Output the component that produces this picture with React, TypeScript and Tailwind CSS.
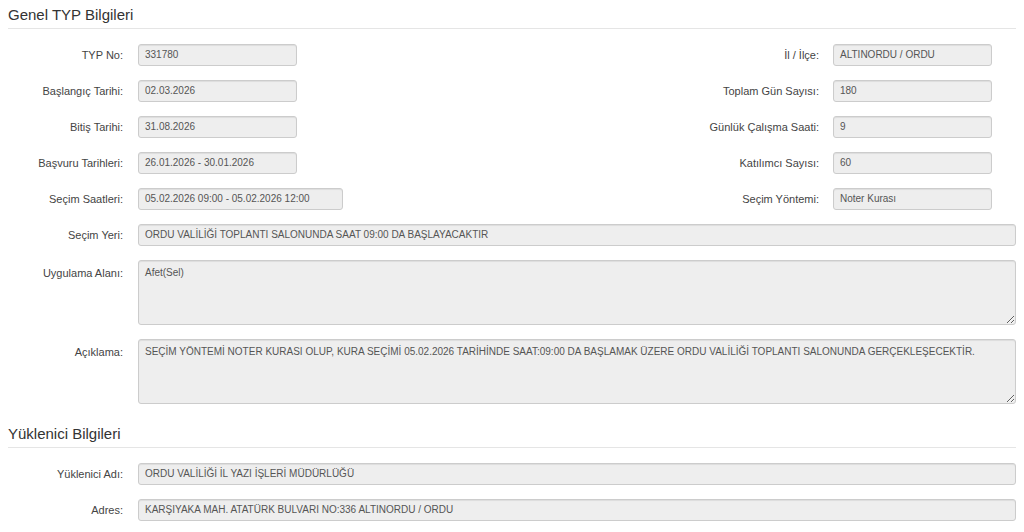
import React from 'react'

type Field = { label: string; value: string; wide?: boolean }

const leftRight: { left: Field; right?: Field }[] = [
  { left: { label: 'TYP No:', value: '331780' }, right: { label: 'İl / İlçe:', value: 'ALTINORDU / ORDU' } },
  { left: { label: 'Başlangıç Tarihi:', value: '02.03.2026' }, right: { label: 'Toplam Gün Sayısı:', value: '180' } },
  { left: { label: 'Bitiş Tarihi:', value: '31.08.2026' }, right: { label: 'Günlük Çalışma Saati:', value: '9' } },
  { left: { label: 'Başvuru Tarihleri:', value: '26.01.2026 - 30.01.2026' }, right: { label: 'Katılımcı Sayısı:', value: '60' } },
  { left: { label: 'Seçim Saatleri:', value: '05.02.2026 09:00 - 05.02.2026 12:00', wide: true }, right: { label: 'Seçim Yöntemi:', value: 'Noter Kurası' } },
]

const inputCls =
  'h-[22px] rounded-[3px] border border-[#cccccc] bg-[#eeeeee] px-[6px] text-[10px] leading-[20px] text-[#555555] shadow-[inset_0_1px_1px_rgba(0,0,0,0.075)] truncate'

function Box({ value, className = '' }: { value: string; className?: string }) {
  return <div className={`${inputCls} ${className}`}>{value}</div>
}

function Label({ text, className = '' }: { text: string; className?: string }) {
  return <div className={`shrink-0 text-right text-[11px] text-[#444444] ${className}`}>{text}</div>
}

function Legend({ title }: { title: string }) {
  return (
    <div className="mx-2 border-b border-[#e5e5e5] pt-[4px] pb-[2px] text-[15px] leading-[22px] text-[#333333]">
      {title}
    </div>
  )
}

function FullRow({ label, value }: { label: string; value: string }) {
  return (
    <div className="flex items-center pl-2 pr-2">
      <Label text={label} className="w-[115px]" />
      <Box value={value} className="ml-[15px] flex-1" />
    </div>
  )
}

function AreaRow({ label, value }: { label: string; value: string }) {
  return (
    <div className="flex items-start pl-2 pr-2">
      <Label text={label} className="w-[115px] pt-[5px] leading-[16px]" />
      <textarea
        readOnly
        value={value}
        className="ml-[15px] h-[65px] flex-1 resize rounded-[3px] border border-[#cccccc] bg-[#eeeeee] px-[6px] pt-[4px] text-[10px] leading-[16px] text-[#555555] shadow-[inset_0_1px_1px_rgba(0,0,0,0.075)] outline-none"
      />
    </div>
  )
}

export default function App() {
  return (
    <div className="h-[532px] w-[1024px] overflow-hidden bg-white font-['Liberation_Sans',Arial,sans-serif]">
      <Legend title="Genel TYP Bilgileri" />

      <div className="mt-[15px] flex flex-col gap-[14px]">
        {leftRight.map((row, i) => (
          <div key={i} className="flex items-center">
            <div className="flex w-[512px] items-center pl-2">
              <Label text={row.left.label} className="w-[115px]" />
              <Box
                value={row.left.value}
                className={`ml-[15px] ${row.left.wide ? 'w-[205px]' : 'w-[159px]'}`}
              />
            </div>
            {row.right && (
              <div className="flex items-center">
                <Label text={row.right.label} className="w-[307px]" />
                <Box value={row.right.value} className="ml-[14px] w-[159px]" />
              </div>
            )}
          </div>
        ))}

        <FullRow label="Seçim Yeri:" value="ORDU VALİLİĞİ TOPLANTI SALONUNDA SAAT 09:00 DA BAŞLAYACAKTIR" />
        <AreaRow label="Uygulama Alanı:" value="Afet(Sel)" />
        <AreaRow
          label="Açıklama:"
          value="SEÇİM YÖNTEMİ NOTER KURASI OLUP, KURA SEÇİMİ 05.02.2026 TARİHİNDE SAAT:09:00 DA BAŞLAMAK ÜZERE ORDU VALİLİĞİ TOPLANTI SALONUNDA GERÇEKLEŞECEKTİR."
        />
      </div>

      <div className="mt-[15px]">
        <Legend title="Yüklenici Bilgileri" />
      </div>

      <div className="mt-[15px] flex flex-col gap-[14px]">
        <FullRow label="Yüklenici Adı:" value="ORDU VALİLİĞİ İL YAZI İŞLERİ MÜDÜRLÜĞÜ" />
        <FullRow label="Adres:" value="KARŞIYAKA MAH. ATATÜRK BULVARI NO:336 ALTINORDU / ORDU" />
      </div>
    </div>
  )
}
